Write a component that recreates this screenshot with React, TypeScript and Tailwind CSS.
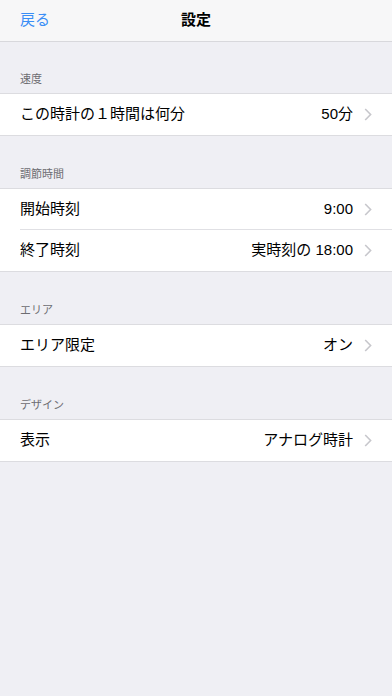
const font = '[font-family:"Liberation_Sans","Noto_Sans_CJK_JP",sans-serif]';

type Row = { label: string; value: string };

const sections: { title: string; rows: Row[] }[] = [
  { title: '速度', rows: [{ label: 'この時計の１時間は何分', value: '50分' }] },
  {
    title: '調節時間',
    rows: [
      { label: '開始時刻', value: '9:00' },
      { label: '終了時刻', value: '実時刻の 18:00' },
    ],
  },
  { title: 'エリア', rows: [{ label: 'エリア限定', value: 'オン' }] },
  { title: 'デザイン', rows: [{ label: '表示', value: 'アナログ時計' }] },
];

function Chevron() {
  return (
    <svg width="8" height="13" viewBox="0 0 8 13" className="ml-[11px] shrink-0">
      <path d="M1.2 1 L6.6 6.5 L1.2 12" fill="none" stroke="#c7c7cc" strokeWidth="1.6" />
    </svg>
  );
}

export default function App() {
  return (
    <div className={`w-[392px] h-[696px] bg-[#efeff4] ${font} text-black`}>
      {/* Nav bar */}
      <div className="h-[42px] bg-[#f7f7f8] border-b border-[#d8d8dc] relative flex items-center justify-center">
        <span className="absolute left-[20px] top-[10px] text-[15px] leading-[20px] text-[#3a8ef6]">戻る</span>
        <span className="text-[15px] font-bold leading-[20px] -mt-[2px]">設定</span>
      </div>

      {sections.map((s, si) => (
        <div key={s.title}>
          <div
            className={`${si === 0 ? 'h-[51px]' : 'h-[52px]'} flex items-end pl-[20px] pb-[7px] text-[11px] leading-[14px] text-[#6d6d72]`}
          >
            {s.title}
          </div>
          <div className="bg-white border-y border-[#dcdce0]">
            {s.rows.map((r, i) => (
              <div key={r.label} className="pl-[20px]">
                <div
                  className={`h-[41px] flex items-center pr-[20px] ${
                    i < s.rows.length - 1 ? 'border-b border-[#e0e0e4]' : ''
                  }`}
                >
                  <span className="text-[15px] flex-1">{r.label}</span>
                  <span className="text-[15px]">{r.value}</span>
                  <Chevron />
                </div>
              </div>
            ))}
          </div>
        </div>
      ))}
    </div>
  );
}
